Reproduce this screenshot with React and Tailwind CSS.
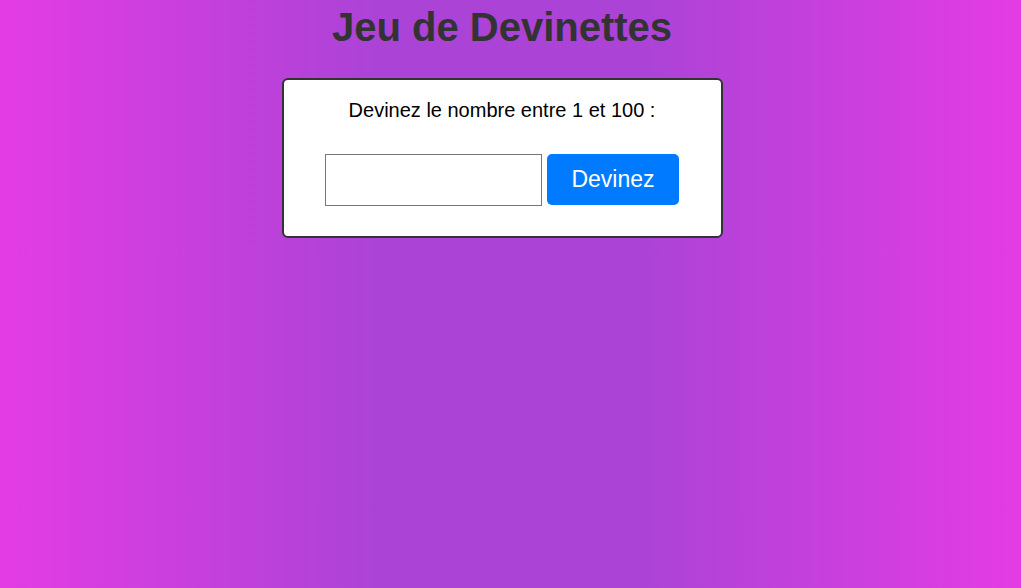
export default function App() {
  return (
    <div className="min-h-[588px] w-full bg-[linear-gradient(to_right,#e43ce4_0%,#aa43d6_38%,#aa43d6_62%,#e43ce4_100%)] pr-[17px] font-['Liberation_Sans',Arial,sans-serif]">
      <h1 className="pt-[4px] text-center text-[40px] leading-[46px] font-bold text-[#333]">
        Jeu de Devinettes
      </h1>

      <div className="mx-auto mt-[28px] w-[441px] rounded-[6px] border-2 border-[#333] bg-white pt-[19px] pb-[30px]">
        <p className="text-center text-[20px] leading-[23px] text-black">
          Devinez le nombre entre 1 et 100 :
        </p>

        <div className="mt-[32px] flex justify-center gap-[5px]">
          <input
            type="text"
            className="h-[52px] w-[217px] border border-[#767676] bg-white px-2 text-[20px] outline-none"
          />
          <button className="h-[51px] w-[132px] rounded-[5px] bg-[#007bff] text-[23px] text-white">
            Devinez
          </button>
        </div>
      </div>
    </div>
  );
}
